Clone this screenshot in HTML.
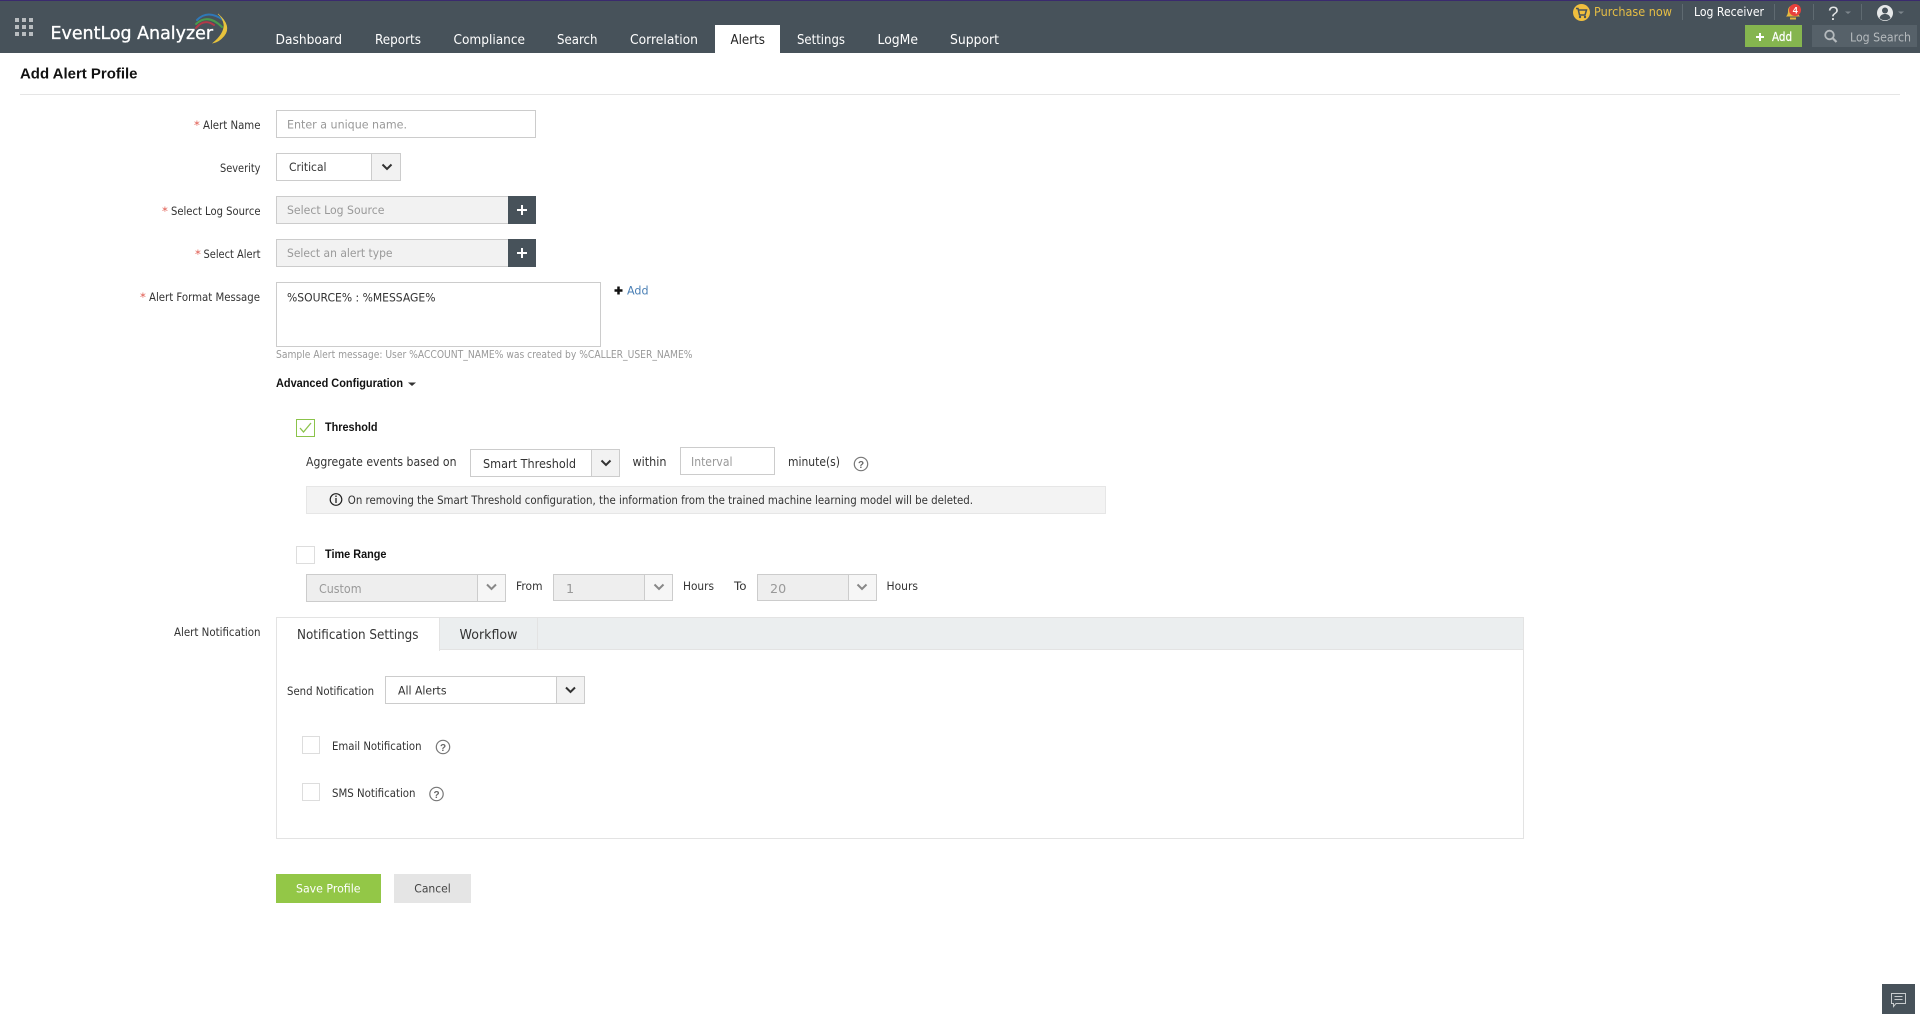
<!DOCTYPE html>
<html lang="en">
<head>
<meta charset="utf-8">
<title>Add Alert Profile - EventLog Analyzer</title>
<style>
html,body{margin:0;padding:0;background:#fff;width:1920px;height:1014px;overflow:hidden}
.b{position:absolute;box-sizing:border-box}
.i{border:1px solid #ccc;background:#fff}
.g{background:#f2f2f2}
.d{background:#47525a}
.c{border:1px solid #ddd;background:#fff}
svg{position:absolute;left:0;top:0}
text{font-family:"DejaVu Sans","Liberation Sans",sans-serif;font-size:11.7px;fill:#333}
.n{font-size:13.7px;fill:#fff}
.p{fill:#999}
.a{font-family:"Liberation Sans",sans-serif;font-weight:bold;font-size:11.5px;fill:#111}
.s{fill:#e05a4f}
.m{font-size:12.7px}
.ch{fill:none;stroke:#333;stroke-width:2}
.chg{fill:none;stroke:#888;stroke-width:2}
.q{fill:none;stroke:#777;stroke-width:1.2}
</style>
</head>
<body>
<!-- header -->
<div class="b" style="left:0;top:0;width:1920px;height:53px;background:#47525a;border-top:1px solid #3a2a6e"></div>
<div class="b" style="left:715px;top:25px;width:65px;height:28px;background:#fff"></div>
<div class="b" style="left:1745px;top:25px;width:57px;height:22px;background:#85b54f"></div>
<div class="b" style="left:1812px;top:25px;width:105px;height:22px;background:#566169"></div>
<div class="b" style="left:1682px;top:4px;width:1px;height:16px;background:#5f6a71"></div>
<div class="b" style="left:1774px;top:4px;width:1px;height:16px;background:#5f6a71"></div>
<div class="b" style="left:1813px;top:4px;width:1px;height:16px;background:#5f6a71"></div>
<div class="b" style="left:1861px;top:4px;width:1px;height:16px;background:#5f6a71"></div>
<!-- title rule -->
<div class="b" style="left:20px;top:94px;width:1880px;height:1px;background:#e5e5e5"></div>
<!-- form boxes -->
<div class="b i" style="left:276px;top:110px;width:260px;height:28px"></div>
<div class="b i" style="left:276px;top:153px;width:125px;height:28px"></div>
<div class="b i g" style="left:371px;top:153px;width:30px;height:28px"></div>
<div class="b i g" style="left:276px;top:196px;width:233px;height:28px"></div>
<div class="b d" style="left:508px;top:196px;width:28px;height:28px"></div>
<div class="b i g" style="left:276px;top:239px;width:233px;height:28px"></div>
<div class="b d" style="left:508px;top:239px;width:28px;height:28px"></div>
<div class="b i" style="left:276px;top:282px;width:325px;height:65px"></div>
<div class="b" style="left:296px;top:419px;width:19px;height:18px;border:1px solid #8bc34a"></div>
<div class="b i" style="left:470px;top:449px;width:150px;height:28px"></div>
<div class="b i g" style="left:591px;top:449px;width:29px;height:28px"></div>
<div class="b i" style="left:680px;top:447px;width:95px;height:28px"></div>
<div class="b" style="left:306px;top:486px;width:800px;height:28px;background:#f3f3f3;border:1px solid #e6e6e6"></div>
<div class="b c" style="left:296px;top:546px;width:19px;height:18px"></div>
<div class="b i" style="left:306px;top:574px;width:200px;height:28px;background:#eee"></div>
<div class="b i" style="left:477px;top:574px;width:29px;height:28px;background:#f6f6f6"></div>
<div class="b i" style="left:553px;top:574px;width:120px;height:27px;background:#eee"></div>
<div class="b i" style="left:644px;top:574px;width:29px;height:27px;background:#f6f6f6"></div>
<div class="b i" style="left:757px;top:574px;width:120px;height:27px;background:#eee"></div>
<div class="b i" style="left:848px;top:574px;width:29px;height:27px;background:#f6f6f6"></div>
<!-- tabs -->
<div class="b" style="left:276px;top:617px;width:1248px;height:222px;border:1px solid #e3e3e3;background:#fff"></div>
<div class="b" style="left:277px;top:618px;width:1246px;height:32px;background:#ebeeef;border-bottom:1px solid #e3e3e3"></div>
<div class="b" style="left:277px;top:618px;width:163px;height:33px;background:#fff;border-right:1px solid #e3e3e3"></div>
<div class="b" style="left:537px;top:618px;width:1px;height:31px;background:#e3e3e3"></div>
<div class="b i" style="left:385px;top:676px;width:200px;height:28px"></div>
<div class="b i g" style="left:556px;top:676px;width:29px;height:28px"></div>
<div class="b c" style="left:302px;top:736px;width:18px;height:18px"></div>
<div class="b c" style="left:302px;top:783px;width:18px;height:18px"></div>
<!-- buttons -->
<div class="b" style="left:276px;top:874px;width:105px;height:29px;background:#93c747"></div>
<div class="b" style="left:394px;top:874px;width:77px;height:29px;background:#e5e5e5"></div>
<div class="b d" style="left:1882px;top:984px;width:33px;height:30px"></div>

<svg width="1920" height="1014" viewBox="0 0 1920 1014" xmlns="http://www.w3.org/2000/svg">
<!-- app grid -->
<g fill="#b9bdc0">
<rect x="15" y="18" width="4" height="4"/><rect x="22" y="18" width="4" height="4"/><rect x="29" y="18" width="4" height="4"/>
<rect x="15" y="25" width="4" height="4"/><rect x="22" y="25" width="4" height="4"/><rect x="29" y="25" width="4" height="4"/>
<rect x="15" y="32" width="4" height="4"/><rect x="22" y="32" width="4" height="4"/><rect x="29" y="32" width="4" height="4"/>
</g>
<!-- logo -->
<text x="50.500" y="39" textLength="162.500" lengthAdjust="spacingAndGlyphs" style="font-size:18px;fill:#fff;stroke:#fff;stroke-width:.35">EventLog Analyzer</text>
<g fill="none" stroke-linecap="round">
<path d="M197 20Q208 9 223 20" stroke="#2f78b7" stroke-width="2"/>
<path d="M196 24Q208 13 222 27" stroke="#4a9a4d" stroke-width="2"/>
<path d="M196 28Q204 18 214 25" stroke="#b23a48" stroke-width="2"/>
<path d="M218 14Q232 26 224 36Q219 42 213 43Q224 34 224 25Q223 18 218 14Z" fill="#e8c33c" stroke="#e8c33c" stroke-width=".6"/>
</g>
<!-- nav -->
<g class="nav">
<text class="n" x="275.500" y="44" textLength="66.500" lengthAdjust="spacingAndGlyphs">Dashboard</text>
<text class="n" x="375" y="44" textLength="46" lengthAdjust="spacingAndGlyphs">Reports</text>
<text class="n" x="453.500" y="44" textLength="71.500" lengthAdjust="spacingAndGlyphs">Compliance</text>
<text class="n" x="557" y="44" textLength="40.500" lengthAdjust="spacingAndGlyphs">Search</text>
<text class="n" x="630" y="44" textLength="68" lengthAdjust="spacingAndGlyphs">Correlation</text>
<text class="n" x="730.500" y="44" textLength="34.500" lengthAdjust="spacingAndGlyphs" style="fill:#222">Alerts</text>
<text class="n" x="797" y="44" textLength="48" lengthAdjust="spacingAndGlyphs">Settings</text>
<text class="n" x="877.500" y="44" textLength="40.500" lengthAdjust="spacingAndGlyphs">LogMe</text>
<text class="n" x="950" y="44" textLength="49" lengthAdjust="spacingAndGlyphs">Support</text>
</g>
<!-- top right -->
<circle cx="1581.500" cy="12.500" r="8.500" fill="#f0bf3e"/>
<path d="M1576 8.500h2l1.500 6.500h5.500l1.500-5h-7.500" fill="none" stroke="#47525a" stroke-width="1.500"/>
<circle cx="1580" cy="17" r="1.200" fill="#47525a"/><circle cx="1585" cy="17" r="1.200" fill="#47525a"/>
<text x="1594" y="16" textLength="78" lengthAdjust="spacingAndGlyphs" style="font-size:12.700px;fill:#e5bd45">Purchase now</text>
<text x="1694" y="16" textLength="70" lengthAdjust="spacingAndGlyphs" style="font-size:12.700px;fill:#fff">Log Receiver</text>
<path d="M1793 5.500c-3.500 0-5 2.500-5 5.500 0 3-1 4.500-2 5.500h14c-1-1-2-2.500-2-5.500 0-3-1.500-5.500-5-5.500z" fill="#e5b93f"/>
<rect x="1790" y="17.500" width="6" height="2" fill="#e5b93f"/>
<circle cx="1795" cy="10" r="6" fill="#e8413c"/>
<text x="1792.800" y="13.500" style="font-size:9px;font-weight:bold;fill:#fff;font-family:'Liberation Sans',sans-serif">4</text>
<text x="1828" y="20" style="font-size:19px;fill:#e4e6e7;font-family:'Liberation Sans',sans-serif">?</text>
<path d="M1845 11.500h6l-3 2.500z" fill="#7e878d"/>
<circle cx="1885" cy="13" r="8" fill="#e6e8e9"/>
<circle cx="1885" cy="10.500" r="3" fill="#47525a"/>
<path d="M1879.500 18c1-3 3-4 5.500-4s4.500 1 5.500 4c-1.500 1.500-3.500 2.300-5.500 2.300s-4-.8-5.500-2.300z" fill="#47525a"/>
<path d="M1898 11.500h6l-3 2.500z" fill="#7e878d"/>
<path d="M1760 33v8M1756 37h8" stroke="#fff" stroke-width="2"/>
<text x="1772" y="41" textLength="20" lengthAdjust="spacingAndGlyphs" style="font-size:12px;fill:#fff;stroke:#fff;stroke-width:.25">Add</text>
<circle cx="1829.500" cy="35" r="4.300" fill="none" stroke="#b5babd" stroke-width="1.800"/>
<path d="M1832.500 38l4 4" stroke="#b5babd" stroke-width="2.200"/>
<text x="1850" y="41.500" textLength="61" lengthAdjust="spacingAndGlyphs" style="font-size:12.700px;fill:#b5babd">Log Search</text>
<!-- title -->
<text x="20" y="78.500" textLength="117.500" lengthAdjust="spacingAndGlyphs" style="font-family:'Liberation Sans',sans-serif;font-size:15px;font-weight:bold;fill:#111">Add Alert Profile</text>
<!-- labels -->
<text class="s" x="194" y="129">*</text>
<text x="203" y="129" textLength="57.500" lengthAdjust="spacingAndGlyphs">Alert Name</text>
<text class="p" x="287" y="128.500" textLength="120" lengthAdjust="spacingAndGlyphs">Enter a unique name.</text>
<text x="220" y="172" textLength="40.500" lengthAdjust="spacingAndGlyphs">Severity</text>
<text x="289" y="171" textLength="37.500" lengthAdjust="spacingAndGlyphs">Critical</text>
<path class="ch" d="M382.500 164.500l4.500 4.500 4.500-4.500"/>
<text class="s" x="162" y="215">*</text>
<text x="171" y="215" textLength="89.500" lengthAdjust="spacingAndGlyphs">Select Log Source</text>
<text class="p" x="287" y="214" textLength="97.500" lengthAdjust="spacingAndGlyphs">Select Log Source</text>
<path d="M522 205v10M517 210h10" stroke="#fff" stroke-width="2"/>
<text class="s" x="195" y="258">*</text>
<text x="203.500" y="258" textLength="57" lengthAdjust="spacingAndGlyphs">Select Alert</text>
<text class="p" x="287" y="257" textLength="105.500" lengthAdjust="spacingAndGlyphs">Select an alert type</text>
<path d="M522 248v10M517 253h10" stroke="#fff" stroke-width="2"/>
<text class="s" x="140" y="301">*</text>
<text x="149" y="301" textLength="111" lengthAdjust="spacingAndGlyphs">Alert Format Message</text>
<text x="287" y="301.500" textLength="148.500" lengthAdjust="spacingAndGlyphs">%SOURCE% : %MESSAGE%</text>
<path d="M618.500 286.500v8M614.500 290.500h8" stroke="#111" stroke-width="2.500"/>
<text x="627" y="294.500" textLength="21.500" lengthAdjust="spacingAndGlyphs" style="fill:#4a7fb5">Add</text>
<text class="p" x="276" y="358" textLength="416.500" lengthAdjust="spacingAndGlyphs" style="font-size:10.700px">Sample Alert message: User %ACCOUNT_NAME% was created by %CALLER_USER_NAME%</text>
<text class="a" x="276" y="387" textLength="127" lengthAdjust="spacingAndGlyphs">Advanced Configuration</text>
<path d="M408 382.500h8l-4 3.500z" fill="#333"/>
<!-- threshold -->
<path d="M300 428l3.500 4 7.500-9" fill="none" stroke="#8bc34a" stroke-width="1.300"/>
<text class="a" x="325" y="431" textLength="52.500" lengthAdjust="spacingAndGlyphs">Threshold</text>
<text class="m" x="306" y="466" textLength="150.500" lengthAdjust="spacingAndGlyphs">Aggregate events based on</text>
<text class="m" x="483" y="468" textLength="93" lengthAdjust="spacingAndGlyphs">Smart Threshold</text>
<path class="ch" d="M601.500 460.500l4.500 4.500 4.500-4.500"/>
<text class="m" x="632.500" y="466" textLength="34" lengthAdjust="spacingAndGlyphs">within</text>
<text class="m p" x="691" y="466" textLength="41.500" lengthAdjust="spacingAndGlyphs">Interval</text>
<text class="m" x="788" y="466" textLength="52" lengthAdjust="spacingAndGlyphs">minute(s)</text>
<circle class="q" cx="861" cy="464" r="6.700"/>
<text x="858" y="468" style="font-size:10px;font-weight:bold;fill:#666;font-family:'Liberation Sans',sans-serif">?</text>
<!-- banner -->
<circle cx="336" cy="499.500" r="5.800" fill="none" stroke="#222" stroke-width="1.200"/>
<path d="M336 498v5M336 495.500v1.500" stroke="#222" stroke-width="1.300"/>
<text x="347.800" y="504" textLength="625.200" lengthAdjust="spacingAndGlyphs">On removing the Smart Threshold configuration, the information from the trained machine learning model will be deleted.</text>
<!-- time range -->
<text class="a" x="325" y="558" textLength="61.500" lengthAdjust="spacingAndGlyphs">Time Range</text>
<text class="m p" x="319" y="593" textLength="42.500" lengthAdjust="spacingAndGlyphs">Custom</text>
<path class="chg" d="M487 584.500l4.500 4.500 4.500-4.500"/>
<text x="516" y="590" textLength="26.500" lengthAdjust="spacingAndGlyphs">From</text>
<text class="m p" x="566" y="593">1</text>
<path class="chg" d="M654.500 584.500l4.500 4.500 4.500-4.500"/>
<text x="683" y="590" textLength="31" lengthAdjust="spacingAndGlyphs">Hours</text>
<text x="734" y="590" textLength="12.500" lengthAdjust="spacingAndGlyphs">To</text>
<text class="m p" x="770" y="593">20</text>
<path class="chg" d="M857.500 584.500l4.500 4.500 4.500-4.500"/>
<text x="886.500" y="590" textLength="31.500" lengthAdjust="spacingAndGlyphs">Hours</text>
<!-- notification -->
<text x="174" y="636" textLength="86.500" lengthAdjust="spacingAndGlyphs">Alert Notification</text>
<text x="297" y="639" textLength="121.500" lengthAdjust="spacingAndGlyphs" style="font-size:13.700px">Notification Settings</text>
<text x="459.500" y="639" textLength="58" lengthAdjust="spacingAndGlyphs" style="font-size:13.700px">Workflow</text>
<text x="287" y="695" textLength="87" lengthAdjust="spacingAndGlyphs">Send Notification</text>
<text x="398" y="694.500" textLength="48.500" lengthAdjust="spacingAndGlyphs">All Alerts</text>
<path class="ch" d="M566 687.500l4.500 4.500 4.500-4.500"/>
<text x="332" y="750" textLength="89.500" lengthAdjust="spacingAndGlyphs">Email Notification</text>
<circle class="q" cx="443" cy="747" r="6.700"/>
<text x="440" y="751" style="font-size:10px;font-weight:bold;fill:#666;font-family:'Liberation Sans',sans-serif">?</text>
<text x="332" y="797" textLength="83.500" lengthAdjust="spacingAndGlyphs">SMS Notification</text>
<circle class="q" cx="436.500" cy="794" r="6.700"/>
<text x="433.500" y="798" style="font-size:10px;font-weight:bold;fill:#666;font-family:'Liberation Sans',sans-serif">?</text>
<!-- buttons -->
<text x="296" y="892.500" textLength="64.500" lengthAdjust="spacingAndGlyphs" style="fill:#fff">Save Profile</text>
<text x="414.300" y="892.500" textLength="36.500" lengthAdjust="spacingAndGlyphs" style="fill:#444">Cancel</text>
<!-- chat -->
<path d="M1891.500 993.500h14v10h-9.500l-2.500 3v-3h-2z" fill="none" stroke="#c8ccce" stroke-width="1"/>
<path d="M1894.500 996.500h8M1894.500 999.500h8" stroke="#c8ccce" stroke-width="1"/>
</svg>
</body>
</html>
